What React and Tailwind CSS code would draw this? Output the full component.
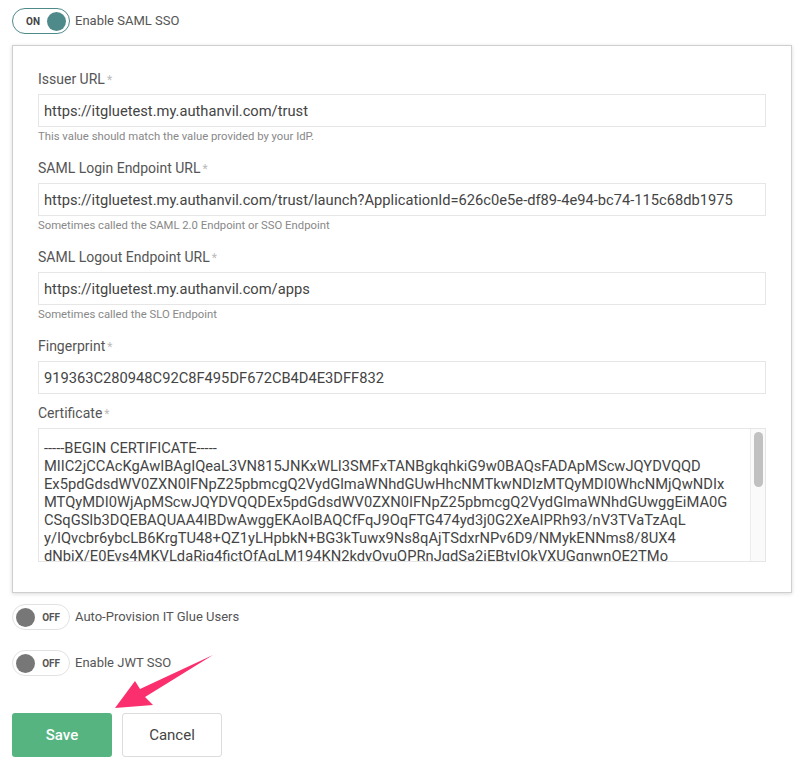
function Toggle({ on, label }) {
  return (
    <div className="flex items-center h-[26px]">
      {on ? (
        <div className="flex items-center justify-between w-[58px] h-[26px] rounded-full border-[1.5px] border-[#4f8a8b] pl-[13px] pr-[3px]">
          <span className="text-[10px] font-bold text-[#444]">ON</span>
          <span className="w-[19px] h-[19px] rounded-full bg-[#4f8a8b]"></span>
        </div>
      ) : (
        <div className="flex items-center justify-between w-[58px] h-[26px] rounded-full border-[1.5px] border-[#e2e2e2] pl-[3px] pr-[9px]">
          <span className="w-[19px] h-[19px] rounded-full bg-[#777]"></span>
          <span className="text-[10px] font-bold text-[#555]">OFF</span>
        </div>
      )}
      <span className="ml-[5px] text-[13px] text-[#555]">{label}</span>
    </div>
  );
}

function Field({ label, value, help, last }) {
  return (
    <div className={last ? "mb-[9px]" : "mb-[14px]"}>
      <div className="h-[20px] leading-[20px] text-[14px] text-[#555] mb-[5px]">
        {label}
        <span className="text-[#bbb] text-[12px] ml-[2px]">*</span>
      </div>
      <div className="h-[33px] border border-[#e6e6e6] flex items-center pl-[5px] pt-[1px] text-[14.7px] text-[#444] whitespace-nowrap overflow-hidden">
        {value}
      </div>
      {help && (
        <div className="mt-[2px] leading-[15px] text-[11.3px] text-[#888]">{help}</div>
      )}
    </div>
  );
}

const certLines = [
  "-----BEGIN CERTIFICATE-----",
  "MIIC2jCCAcKgAwIBAgIQeaL3VN815JNKxWLI3SMFxTANBgkqhkiG9w0BAQsFADApMScwJQYDVQQD",
  "Ex5pdGdsdWV0ZXN0IFNpZ25pbmcgQ2VydGlmaWNhdGUwHhcNMTkwNDIzMTQyMDI0WhcNMjQwNDIx",
  "MTQyMDI0WjApMScwJQYDVQQDEx5pdGdsdWV0ZXN0IFNpZ25pbmcgQ2VydGlmaWNhdGUwggEiMA0G",
  "CSqGSIb3DQEBAQUAA4IBDwAwggEKAoIBAQCfFqJ9OqFTG474yd3j0G2XeAIPRh93/nV3TVaTzAqL",
  "y/IQvcbr6ybcLB6KrgTU48+QZ1yLHpbkN+BG3kTuwx9Ns8qAjTSdxrNPv6D9/NMykENNms8/8UX4",
  "dNbiX/E0Evs4MKVLdaRjg4fictOfAqLM194KN2kdyOyuQPRnJqdSa2iEBtyIOkVXUGqnwnOE2TMo",
];

export default function App() {
  return (
    <div className="relative w-[804px] h-[768px] bg-white px-[12px] pt-[8px] font-['Roboto',sans-serif]">
      <Toggle on label="Enable SAML SSO" />

      <div className="mt-[11px] w-[780px] border border-[#cfcfcf] shadow-[0_1px_4px_rgba(0,0,0,0.15)] pt-[23px] pb-[30px] pl-[25px] pr-[25px]">
        <Field
          label="Issuer URL"
          value="https://itgluetest.my.authanvil.com/trust"
          help="This value should match the value provided by your IdP."
        />
        <Field
          label="SAML Login Endpoint URL"
          value="https://itgluetest.my.authanvil.com/trust/launch?ApplicationId=626c0e5e-df89-4e94-bc74-115c68db1975"
          help="Sometimes called the SAML 2.0 Endpoint or SSO Endpoint"
        />
        <Field
          label="SAML Logout Endpoint URL"
          value="https://itgluetest.my.authanvil.com/apps"
          help="Sometimes called the SLO Endpoint"
        />
        <Field label="Fingerprint" value="919363C280948C92C8F495DF672CB4D4E3DFF832" last />

        <div className="h-[20px] leading-[20px] text-[14px] text-[#555] mb-[5px]">
          Certificate
          <span className="text-[#bbb] text-[12px] ml-[2px]">*</span>
        </div>
        <div className="flex h-[134px] border border-[#e6e6e6] overflow-hidden">
          <div className="flex-1 pl-[5px] pt-[10px] text-[14.7px] leading-[18px] text-[#444] whitespace-nowrap overflow-hidden">
            {certLines.map((l, i) => (
              <div key={i}>{l}</div>
            ))}
          </div>
          <div className="w-[15px] border-l border-[#ececec] bg-[#fafafa] pt-[3px] flex justify-center">
            <div className="w-[9px] h-[55px] rounded-full bg-[#c1c1c1]"></div>
          </div>
        </div>
      </div>

      <div className="mt-[11px]">
        <Toggle label="Auto-Provision IT Glue Users" />
      </div>
      <div className="mt-[20px]">
        <Toggle label="Enable JWT SSO" />
      </div>

      <div className="mt-[37px] flex gap-[10px]">
        <button className="w-[100px] h-[44px] rounded-[3px] bg-[#55b47f] text-white text-[15px] font-medium">
          Save
        </button>
        <button className="w-[100px] h-[44px] rounded-[3px] border border-[#dcdcdc] bg-white text-[#444] text-[15px]">
          Cancel
        </button>
      </div>

      <svg className="absolute left-0 top-0 pointer-events-none" width="804" height="768">
        <polygon
          points="213,655 145,697 153,705 115,708 135,681 140,689"
          fill="#fb2f6e"
        />
      </svg>
    </div>
  );
}
